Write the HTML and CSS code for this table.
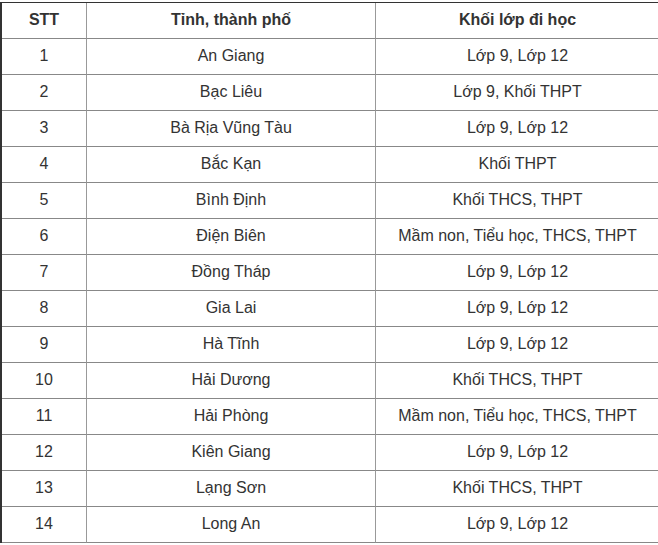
FILE: index.html
```html
<!DOCTYPE html>
<html lang="vi">
<head>
<meta charset="utf-8">
<link rel="stylesheet" href="styles.css">
</head>
<body>
<table class="tbl">
  <colgroup>
    <col class="c1"><col class="c2"><col class="c3">
  </colgroup>
  <thead>
    <tr><th>STT</th><th>Tỉnh, thành phố</th><th>Khối lớp đi học</th></tr>
  </thead>
  <tbody>
    <tr><td>1</td><td>An Giang</td><td>Lớp 9, Lớp 12</td></tr>
    <tr><td>2</td><td>Bạc Liêu</td><td>Lớp 9, Khối THPT</td></tr>
    <tr><td>3</td><td>Bà Rịa Vũng Tàu</td><td>Lớp 9, Lớp 12</td></tr>
    <tr><td>4</td><td>Bắc Kạn</td><td>Khối THPT</td></tr>
    <tr><td>5</td><td>Bình Định</td><td>Khối THCS, THPT</td></tr>
    <tr><td>6</td><td>Điện Biên</td><td>Mầm non, Tiểu học, THCS, THPT</td></tr>
    <tr><td>7</td><td>Đồng Tháp</td><td>Lớp 9, Lớp 12</td></tr>
    <tr><td>8</td><td>Gia Lai</td><td>Lớp 9, Lớp 12</td></tr>
    <tr><td>9</td><td>Hà Tĩnh</td><td>Lớp 9, Lớp 12</td></tr>
    <tr><td>10</td><td>Hải Dương</td><td>Khối THCS, THPT</td></tr>
    <tr><td>11</td><td>Hải Phòng</td><td>Mầm non, Tiểu học, THCS, THPT</td></tr>
    <tr><td>12</td><td>Kiên Giang</td><td>Lớp 9, Lớp 12</td></tr>
    <tr><td>13</td><td>Lạng Sơn</td><td>Khối THCS, THPT</td></tr>
    <tr><td>14</td><td>Long An</td><td>Lớp 9, Lớp 12</td></tr>
  </tbody>
</table>
</body>
</html>
```
FILE: styles.css
```css
html, body {
  margin: 0;
  padding: 0;
  background: #fff;
}
body {
  padding-top: 2px;
  font-family: "Liberation Sans", Arial, sans-serif;
  font-size: 16px;
  color: #333;
}
.tbl {
  border-collapse: separate;
  border-spacing: 0;
  table-layout: fixed;
  width: 659px;
  border-top: 1px solid #333;
  border-left: 2px solid #333;
}
.c1 { width: 85px; }
.c2 { width: 289px; }
.c3 { width: 283px; }
.tbl th, .tbl td {
  box-sizing: border-box;
  height: 36px;
  padding: 0 4px 1px;
  text-align: center;
  vertical-align: middle;
  border-bottom: 1px solid #888;
  white-space: nowrap;
}
.tbl th {
  font-weight: bold;
  padding-bottom: 2px;
}
.tbl th:not(:last-child), .tbl td:not(:last-child) {
  border-right: 1px solid #999;
}
```
